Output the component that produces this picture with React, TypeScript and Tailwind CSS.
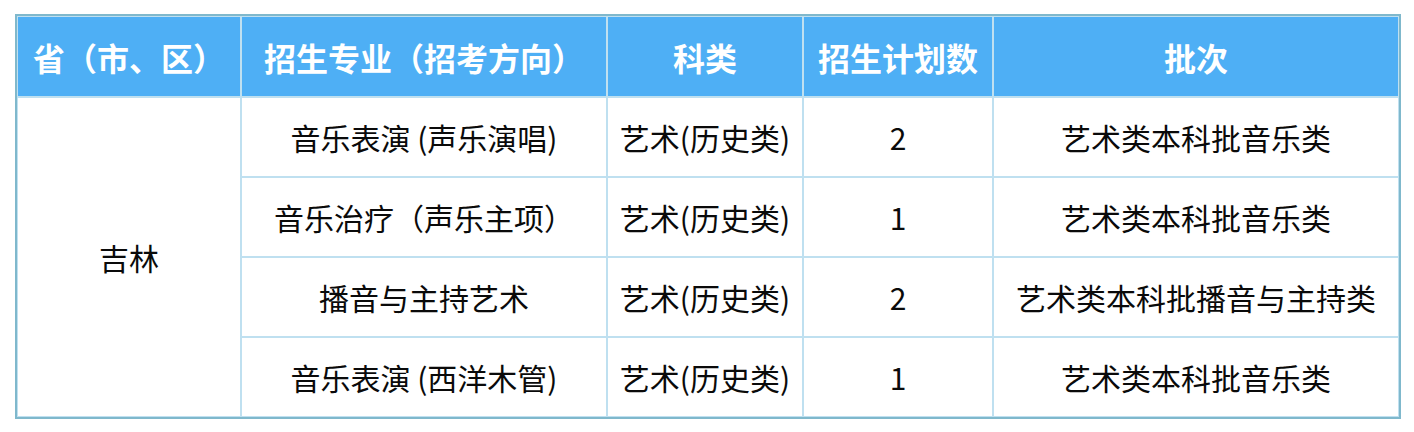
const rows = [
  { major: "音乐表演 (声乐演唱)", kind: "艺术(历史类)", plan: "2", batch: "艺术类本科批音乐类" },
  { major: "音乐治疗（声乐主项）", kind: "艺术(历史类)", plan: "1", batch: "艺术类本科批音乐类" },
  { major: "播音与主持艺术", kind: "艺术(历史类)", plan: "2", batch: "艺术类本科批播音与主持类" },
  { major: "音乐表演 (西洋木管)", kind: "艺术(历史类)", plan: "1", batch: "艺术类本科批音乐类" },
];

const th = "border-2 border-[#bfe0f0] text-white font-bold text-[32px] text-center align-middle";
const td = "border-2 border-[#bfe0f0] text-[#0a0a0a] text-[30px] text-center align-middle";

export default function App() {
  return (
    <div
      className="w-[1414px] h-[432px] bg-white pt-[15px] pl-[16px]"
      style={{ fontFamily: '"Microsoft YaHei", "Noto Sans CJK SC", sans-serif' }}
    >
      <table className="border-collapse table-fixed w-[1382px] outline outline-2 outline-[#7fb8cc] -outline-offset-1">
        <colgroup>
          <col className="w-[224px]" />
          <col className="w-[366px]" />
          <col className="w-[196px]" />
          <col className="w-[190px]" />
          <col className="w-[406px]" />
        </colgroup>
        <thead>
          <tr className="h-[81px] bg-[#4eaff5]">
            <th className={th}>省（市、区）</th>
            <th className={th}>招生专业（招考方向）</th>
            <th className={th}>科类</th>
            <th className={th}>招生计划数</th>
            <th className={th}>批次</th>
          </tr>
        </thead>
        <tbody>
          {rows.map((r, i) => (
            <tr key={i} className="h-[80px]">
              {i === 0 && (
                <td rowSpan={4} className={td}>
                  吉林
                </td>
              )}
              <td className={td}>{r.major}</td>
              <td className={td}>{r.kind}</td>
              <td className={td}>{r.plan}</td>
              <td className={td}>{r.batch}</td>
            </tr>
          ))}
        </tbody>
      </table>
    </div>
  );
}
